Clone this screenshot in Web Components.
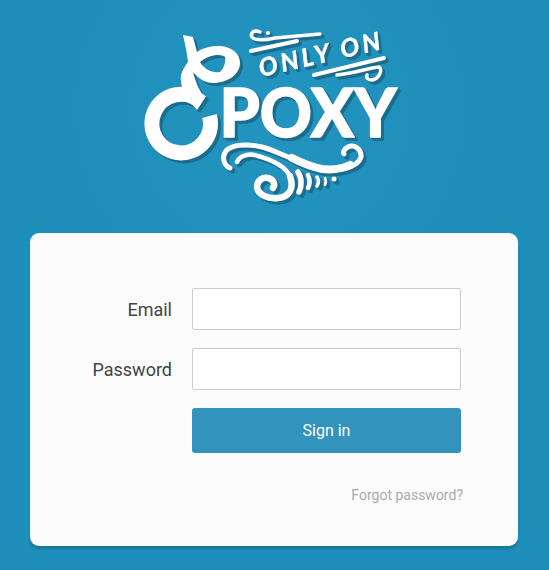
<!DOCTYPE html>
<html>
<head>
<meta charset="utf-8">
<title>Sign in</title>
<style>
  html, body { margin: 0; height: 100%; }
  body {
    background: radial-gradient(circle 230px at 270px 110px, #2394c0 0%, #1f90bc 70%, #1e8eba 100%) #1e8eba;
    font-family: Roboto, "Liberation Sans", sans-serif;
  }
</style>
</head>
<body>
<login-page>
  <brand-logo></brand-logo>
  <login-card>
    <form-row label="Email"><text-field type="email"></text-field></form-row>
    <form-row label="Password"><text-field type="password"></text-field></form-row>
    <form-row><primary-button>Sign in</primary-button></form-row>
    <forgot-link slot="footer">Forgot password?</forgot-link>
  </login-card>
</login-page>
<script>
class LoginPage extends HTMLElement {
    constructor() {
        super();
        this.attachShadow({mode: 'open'});
        this.shadowRoot.innerHTML = `
            <style>
                :host { display: flex; flex-direction: column; align-items: flex-start; gap: 20px; height: 570px; padding: 20px 0 0 30px; box-sizing: border-box; }
            </style>
            <slot></slot>
        `;
    }
}
class BrandLogo extends HTMLElement {
    constructor() {
        super();
        this.attachShadow({mode: 'open'});
        this.shadowRoot.innerHTML = `
            <style>
                :host { display: block; width: 270px; height: 193px; margin-left: 110px; }
                svg { display: block; overflow: visible; }
                .mark { filter: drop-shadow(1px 1px 0 #1c6d8d) drop-shadow(1px 1px 0 #1c6d8d) drop-shadow(1px 1px 0 #1c6d8d); }
                .line { fill: none; stroke: #fff; stroke-linecap: round; stroke-linejoin: round; }
                .ring { fill: none; stroke: #fff; stroke-width: 15px; stroke-linecap: butt; }
                text { fill: #fff; stroke: #fff; stroke-linejoin: round; }
                .poxy { font: 900 66px Lato, "Liberation Sans", sans-serif; stroke-width: 1.4px; }
                .only { font: italic 700 25px Lato, "Liberation Sans", sans-serif; stroke-width: 0.5px; }
            </style>
            <svg width="270" height="193" viewBox="140 20 270 193">
                <g class="mark">
                    <path class="ring" d="M201 102 A29.300 29.300 0 1 0 209.500 116" />
                    <!-- stem and loop -->
                    <path fill="#fff" fill-rule="evenodd" d="M183 35 L193 37 L197 52 C204 47 212 46 220 46 C232 47 240 53 240 63 C240 74 228 83 213 83 C205 83 199 79 193 72 C195 80 199 91 205 98 L197 110 C188 100 182 92 181 81 C180 74 183 69 188 62 C187 53 185 44 183 35 Z M200 62 C205 70 212 73 220 72 C224 68 226 62 225 57 C221 53 208 55 200 62 Z" />
                    <text class="poxy" x="219.500" y="137" textLength="177" lengthAdjust="spacingAndGlyphs">POXY</text>
                    <!-- top flourish and caption -->
                    <path class="line" stroke-width="3.500" d="M260 32 C254 29 250 33 252 37 C255 41 266 40 275 38 L320 34" />
                    <circle cx="268" cy="33" r="2" fill="#fff" />
                    <path class="line" stroke-width="4" d="M251 51 L297 41" />
                    <text class="only" x="261" y="77" transform="rotate(-13 261 77)" textLength="124" lengthAdjust="spacing">ONLY ON</text>
                    <path class="line" stroke-width="4" d="M314 75 L384 58" />
                    <path class="line" stroke-width="3.500" d="M337 75 C355 73 368 68 379 67 C383 70 379 79 372 80 C368 80 366 78 367 75" />
                    <!-- bottom swash -->
                    <path class="line" stroke-width="5" d="M230 168 C223 165 221 155 228 149 C236 144 250 144 262 147 C275 150 295 162 322 169 C340 172 358 167 361 157 C362 149 354 144 348 147 C344 149 343 152 344 154" />
                    <path class="line" stroke-width="8" d="M292 158 C302 163 312 167 322 169 C332 170 342 169 350 165" />
                    <path class="line" stroke-width="4.500" d="M237 162 C240 155 250 153 258 156 C272 160 285 166 290 176" />
                    <path class="line" stroke-width="6.500" d="M290 176 C295 190 288 197 278 198 C268 199 258 195 257 187 C257 180 263 177 268 178 C273 179 276 184 273 188" />
                    <path class="line" stroke-width="5.500" d="M298 172 C302 178 302 186 299 192" />
                    <path class="line" stroke-width="4.500" d="M308 175 C310 179 310 184 308 188" />
                    <path class="line" stroke-width="3.500" d="M317 177 C319 180 319 183 317 186" />
                    <path class="line" stroke-width="2.500" d="M325 178 C326 180 326 183 325 185" />
                    <circle cx="334" cy="179" r="2.500" fill="#fff" />
                </g>
            </svg>
        `;
    }
}
class LoginCard extends HTMLElement {
    constructor() {
        super();
        this.attachShadow({mode: 'open'});
        this.shadowRoot.innerHTML = `
            <style>
                :host {
                    box-sizing: border-box; width: 488px; height: 313px;
                    padding: 55px 57px 0 0; background: #fcfcfc; border-radius: 9px;
                    box-shadow: 0 3px 2px #1a7898; display: flex; flex-direction: column;
                }
                .rows { display: flex; flex-direction: column; gap: 18px; }
                footer { margin-top: 32px; margin-right: -2px; text-align: right; }
            </style>
            <div class="rows"><slot></slot></div>
            <footer><slot name="footer"></slot></footer>
        `;
    }
}
class FormRow extends HTMLElement {
    constructor() {
        super();
        this.attachShadow({mode: 'open'});
        this.shadowRoot.innerHTML = `
            <style>
                :host { display: grid; grid-template-columns: 142px 269px; column-gap: 20px; align-items: center; }
                label { font-size: 18px; color: #444; text-align: right; }
            </style>
            <label>${this.getAttribute('label') || ''}</label>
            <slot></slot>
        `;
    }
}
class TextField extends HTMLElement {
    constructor() {
        super();
        this.attachShadow({mode: 'open'});
        this.shadowRoot.innerHTML = `
            <style>
                :host { display: block; }
                input { display: block; box-sizing: border-box; width: 269px; height: 42px; padding: 0 10px; background: #fff; border: 1px solid #ccc; border-radius: 2px; outline: none; font: 16px Roboto, sans-serif; }
            </style>
            <input type="${this.getAttribute('type') || 'text'}">
        `;
    }
}
class PrimaryButton extends HTMLElement {
    constructor() {
        super();
        this.attachShadow({mode: 'open'});
        this.shadowRoot.innerHTML = `
            <style>
                :host { display: block; }
                button { display: block; width: 269px; height: 45px; padding: 0; border: 0; border-radius: 3px; background: #3293bd; color: #fff; font: 16px Roboto, sans-serif; }
            </style>
            <button type="button"><slot></slot></button>
        `;
    }
}
class ForgotLink extends HTMLElement {
    constructor() {
        super();
        this.attachShadow({mode: 'open'});
        this.shadowRoot.innerHTML = `
            <style>
                :host { display: inline-block; font-size: 14px; line-height: 20px; color: #aaa; }
            </style>
            <slot></slot>
        `;
    }
}
customElements.define('login-page', LoginPage);
customElements.define('brand-logo', BrandLogo);
customElements.define('login-card', LoginCard);
customElements.define('form-row', FormRow);
customElements.define('text-field', TextField);
customElements.define('primary-button', PrimaryButton);
customElements.define('forgot-link', ForgotLink);
</script>
</body>
</html>
